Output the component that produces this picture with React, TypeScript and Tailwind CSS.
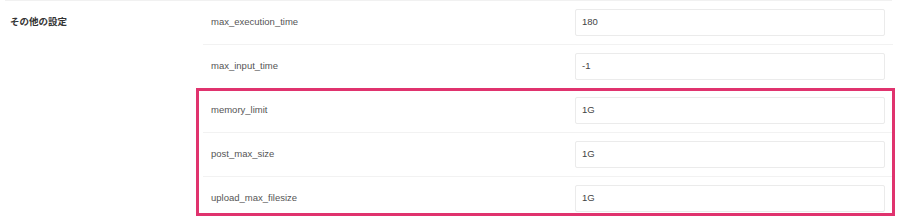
const rows = [
  { name: 'max_execution_time', value: '180' },
  { name: 'max_input_time', value: '-1' },
  { name: 'memory_limit', value: '1G' },
  { name: 'post_max_size', value: '1G' },
  { name: 'upload_max_filesize', value: '1G' },
]

export default function App() {
  return (
    <div
      className="relative h-[218px] w-[900px] overflow-hidden bg-white"
      style={{ fontFamily: '"Liberation Sans", "Noto Sans CJK JP", sans-serif' }}
    >
      {/* previous section's bottom border */}
      <div className="ml-[5px] mr-[8px] h-px bg-[#f1f1f1]" />

      <div className="flex">
        {/* Section title */}
        <div className="w-[203px] shrink-0 pl-[10px] pt-[7px]">
          <span className="text-[9.5px] font-bold text-[#333]">その他の設定</span>
        </div>

        {/* Settings rows */}
        <div className="w-[690px]">
          {rows.map((r) => (
            <div
              key={r.name}
              className="flex h-[44px] items-center border-b border-[#f2f2f2] pr-[8px]"
            >
              <div className="flex-1 pl-[8px] text-[9.5px] text-[#555]">{r.name}</div>
              <div className="flex h-[27px] w-[310px] items-center rounded-[2px] border border-[#ebebeb] px-[6px] text-[9.5px] text-[#444]">
                {r.value}
              </div>
            </div>
          ))}
        </div>
      </div>

      {/* highlight annotation */}
      <div className="pointer-events-none absolute left-[196px] top-[88px] h-[128px] w-[699px] border-[3px] border-[#e0336e]" />
    </div>
  )
}
